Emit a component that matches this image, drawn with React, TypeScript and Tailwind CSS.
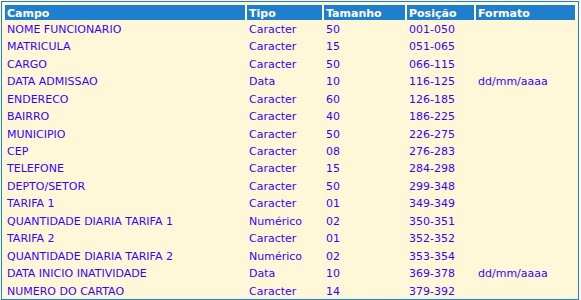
const rows: [string, string, string, string, string][] = [
  ['NOME FUNCIONARIO', 'Caracter', '50', '001-050', ''],
  ['MATRICULA', 'Caracter', '15', '051-065', ''],
  ['CARGO', 'Caracter', '50', '066-115', ''],
  ['DATA ADMISSAO', 'Data', '10', '116-125', 'dd/mm/aaaa'],
  ['ENDERECO', 'Caracter', '60', '126-185', ''],
  ['BAIRRO', 'Caracter', '40', '186-225', ''],
  ['MUNICIPIO', 'Caracter', '50', '226-275', ''],
  ['CEP', 'Caracter', '08', '276-283', ''],
  ['TELEFONE', 'Caracter', '15', '284-298', ''],
  ['DEPTO/SETOR', 'Caracter', '50', '299-348', ''],
  ['TARIFA 1', 'Caracter', '01', '349-349', ''],
  ['QUANTIDADE DIARIA TARIFA 1', 'Numérico', '02', '350-351', ''],
  ['TARIFA 2', 'Caracter', '01', '352-352', ''],
  ['QUANTIDADE DIARIA TARIFA 2', 'Numérico', '02', '353-354', ''],
  ['DATA INICIO INATIVIDADE', 'Data', '10', '369-378', 'dd/mm/aaaa'],
  ['NUMERO DO CARTAO', 'Caracter', '14', '379-392', ''],
];

const headers = ['Campo', 'Tipo', 'Tamanho', 'Posição', 'Formato'];

export default function App() {
  return (
    <div className="w-[581px] h-[300px] bg-white pl-px pt-px font-['DejaVu_Sans',Verdana,sans-serif] text-[11px]">
      <div className="w-[578px] h-[299px] border border-[#1f7fcf] bg-[#fff8d8] px-[3px] pt-[3px] pb-0">
        <div className="grid h-full grid-cols-[240px_75px_81px_67px_99px] grid-rows-[15px_repeat(16,minmax(0,1fr))] gap-x-[2px] gap-y-[2px]">
          {headers.map((h) => (
            <div
              key={h}
              className="bg-[#1f7fcf] px-[2px] pt-px font-bold leading-[15px] text-white"
            >
              {h}
            </div>
          ))}
          {rows.map((r) =>
            r.map((c, i) => (
              <div
                key={r[0] + i}
                className="flex items-center px-[2px] pt-px text-[#3a00ff]"
              >
                {c}
              </div>
            ))
          )}
        </div>
      </div>
    </div>
  );
}
